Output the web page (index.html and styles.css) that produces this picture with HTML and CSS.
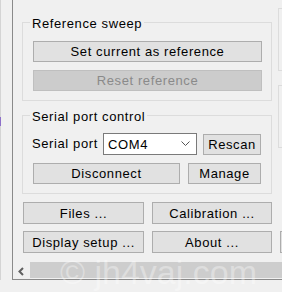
FILE: index.html
```html
<!DOCTYPE html>
<html lang="en">
<head>
    <meta charset="UTF-8">
    <title>Sweep settings</title>
    <link rel="stylesheet" href="styles.css">
</head>
<body>

    <div class="window">
        <div class="strip"><span class="mark"></span></div>

        <div class="frame">
            <div class="view">
                <div class="top">
                    <div class="col">
                        <div class="group ref-group">
                            <span class="group-title">Reference sweep</span>
                            <button class="btn wide first">Set current as reference</button>
                            <button class="btn wide" disabled>Reset reference</button>
                        </div>

                        <div class="group serial-group">
                            <span class="group-title">Serial port control</span>
                            <div class="port-row">
                                <span class="label">Serial port</span>
                                <div class="combo">
                                    <span>COM4</span>
                                    <svg width="9" height="6" viewBox="0 0 9 6"><polyline points="0.5,0.5 4.5,4.5 8.5,0.5" fill="none" stroke="#555" stroke-width="1"/></svg>
                                </div>
                                <button class="btn rescan">Rescan</button>
                            </div>
                            <div class="conn-row">
                                <button class="btn disconnect">Disconnect</button>
                                <button class="btn manage">Manage</button>
                            </div>
                        </div>
                    </div>

                    <div class="col2">
                        <div class="panel first"></div>
                        <div class="panel second"></div>
                    </div>
                </div>

                <div class="btn-row files-row">
                    <button class="btn half">Files ...</button>
                    <button class="btn half">Calibration ...</button>
                </div>
                <div class="btn-row">
                    <button class="btn half">Display setup ...</button>
                    <button class="btn half">About ...</button>
                    <button class="btn half"></button>
                </div>
            </div>

            <div class="hscroll">
                <svg class="arrow" width="8" height="9" viewBox="0 0 8 9"><polyline points="6,1 2.5,4.5 6,8" fill="none" stroke="#606060" stroke-width="2"/></svg>
                <div class="thumb"></div>
            </div>
        </div>
    </div>

    <div class="watermark">© jh4vaj.com</div>

</body>
</html>
```

FILE: styles.css
```css
body {
    margin: 0;
    width: 282px;
    height: 292px;
    overflow: hidden;
    background-color: #f0f0f0;
    font-family: "Liberation Sans", Arial, sans-serif;
    font-size: 13px;
    letter-spacing: 0.6px;
    color: black;
    position: relative;
}

.window {
    display: flex;
    height: 280px;
}

.strip {
    width: 11px;
    flex-shrink: 0;
    border-left: 1px solid #d4d4d4;
}

.mark {
    display: block;
    width: 1px;
    height: 9px;
    margin: 117px 0 0 -1px;
    background-color: #8c6fc8;
}

.frame {
    flex: 1;
    min-width: 0;
    display: flex;
    flex-direction: column;
    border-left: 1px solid #8a8a8a;
    border-bottom: 1px solid #8a8a8a;
}

.view {
    height: 262px;
    overflow: hidden;
    padding-left: 9px;
}

.top {
    display: flex;
    gap: 6px;
}

.col {
    width: 250px;
    flex-shrink: 0;
}

.group {
    border: 1px solid #dcdcdc;
    padding: 0 9px 9px 10px;
}

.ref-group {
    margin-top: 22px;
}

.serial-group {
    margin-top: 14px;
}

.group-title {
    display: block;
    width: fit-content;
    height: 15px;
    line-height: 15px;
    margin: -7px 0 0 -3px;
    padding: 0 2px;
    background-color: #f0f0f0;
}

.btn {
    display: block;
    box-sizing: border-box;
    height: 21px;
    padding: 0;
    font-family: inherit;
    font-size: inherit;
    letter-spacing: inherit;
    color: black;
    background-color: #e1e1e1;
    border: 1px solid #adadad;
    border-radius: 0;
    white-space: nowrap;
}

.btn:disabled {
    background-color: #cccccc;
    border-color: #bfbfbf;
    color: #8a8a8a;
}

.wide {
    width: 229px;
}

.wide.first {
    margin-top: 10px;
}

.wide + .wide {
    margin-top: 8px;
}

.port-row {
    display: flex;
    align-items: flex-start;
    margin-top: 9px;
}

.label {
    flex-shrink: 0;
    width: 71px;
    margin-left: -1px;
    line-height: 22px;
    white-space: nowrap;
}

.combo {
    flex-shrink: 0;
    box-sizing: border-box;
    width: 94px;
    height: 22px;
    display: flex;
    align-items: center;
    justify-content: space-between;
    padding: 0 6px 0 4px;
    background-color: white;
    border: 1px solid #7a7a7a;
}

.rescan {
    flex-shrink: 0;
    width: 58px;
    margin: 1px 0 0 6px;
}

.conn-row {
    display: flex;
    gap: 8px;
    margin-top: 8px;
}

.disconnect {
    width: 147px;
}

.manage {
    width: 73px;
}

.col2 {
    width: 100px;
    flex-shrink: 0;
}

.panel {
    border: 1px solid #dcdcdc;
}

.panel.first {
    margin-top: 8px;
    height: 61px;
}

.panel.second {
    margin-top: 14px;
    height: 61px;
}

.btn-row {
    display: flex;
    gap: 8px;
    margin-left: 1px;
}

.files-row {
    margin-top: 8px;
}

.btn-row + .btn-row {
    margin-top: 7px;
}

.half {
    width: 121px;
    height: 22px;
    flex-shrink: 0;
}

.half:nth-child(2) {
    width: 120px;
}

.hscroll {
    display: flex;
    align-items: flex-start;
    height: 17px;
}

.arrow {
    margin: 5px 0 0 4px;
}

.thumb {
    flex: 1;
    height: 16px;
    margin-left: 5px;
    background-color: #cdcdcd;
}

.watermark {
    position: absolute;
    left: 60px;
    top: 252px;
    font-size: 34px;
    line-height: 40px;
    letter-spacing: 0;
    color: rgba(255, 255, 255, 0.35);
    white-space: nowrap;
}
```
